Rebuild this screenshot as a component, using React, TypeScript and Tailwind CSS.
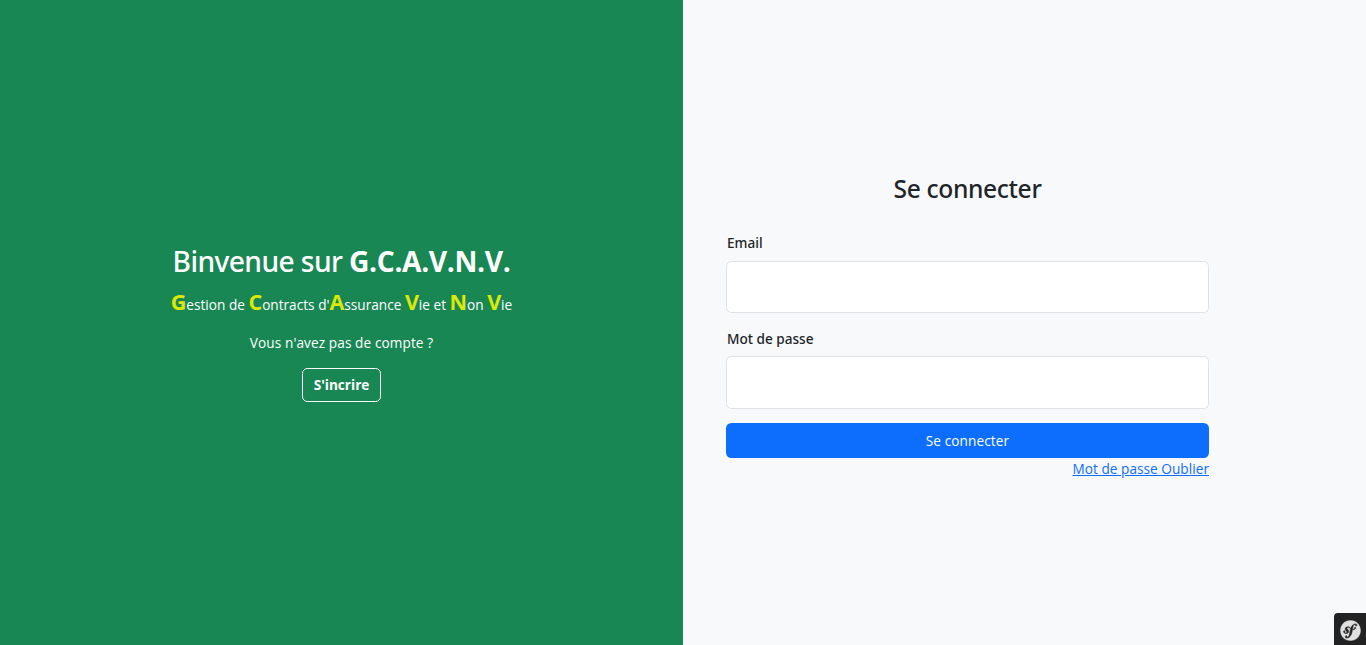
import { SiSymfony } from "react-icons/si";

function Initial({ children }: { children: string }) {
  return <b className="text-[21.6px] font-bold leading-none tracking-[-0.1px] text-[#dce808]">{children}</b>;
}

function Field({ label, type, className }: { label: string; type: string; className: string }) {
  return (
    <label className="flex flex-col font-medium [font-family:'Noto_Sans',sans-serif]">
      <span className="pl-px">{label}</span>
      <input type={type} className={`rounded-[5.4px] border border-[#dee2e6] bg-white px-3 outline-none ${className}`} />
    </label>
  );
}

export default function App() {
  return (
    <div className="relative flex h-[645px] w-full overflow-hidden bg-[#f8f9fa] text-[13.6px] leading-[21px] text-[#212529] [font-family:'Open_Sans','Noto_Sans',sans-serif]">
      <section className="flex w-1/2 flex-col items-center bg-[#198754] pt-[244px] text-white">
        <h1 className="mb-[10px] text-[28.2px] font-medium leading-[35px] tracking-[-0.6px] [font-family:'Noto_Sans',sans-serif]">
          Binvenue sur <b className="font-bold tracking-[-0.35px] [font-family:'Open_Sans',sans-serif]">G.C.A.V.N.V.</b>
        </h1>
        <p className="mb-[11px] leading-[32px] tracking-[0.02px]">
          <Initial>G</Initial>estion de <Initial>C</Initial>ontracts d'<Initial>A</Initial>ssurance <Initial>V</Initial>ie et <Initial>N</Initial>on <Initial>V</Initial>ie
        </p>
        <p className="mb-[15px] tracking-[0.1px]">Vous n'avez pas de compte ?</p>
        <button type="button" className="h-[34px] w-[79px] rounded-[5.4px] border border-white pb-px text-[13.6px] font-bold">S'incrire</button>
      </section>
      <section className="flex w-1/2 justify-start pl-[43px] pt-[173px]">
        <form className="flex w-[483px] flex-col">
          <h2 className="mb-[27px] text-center text-[24.6px] font-medium leading-[32px] tracking-[-0.35px] [font-family:'Noto_Sans',sans-serif]">Se connecter</h2>
          <Field label="Email" type="email" className="mb-[15px] mt-[8px] h-[52px]" />
          <Field label="Mot de passe" type="password" className="mb-[14px] mt-[7px] h-[53px]" />
          <button type="button" className="h-[35px] rounded-[5.4px] bg-[#0d6efd] tracking-[0.11px] text-white">Se connecter</button>
          <a href="#" className="self-end text-[#0d6efd] underline tracking-[0.05px]">Mot de passe Oublier</a>
        </form>
      </section>
      <div className="absolute bottom-0 right-0 flex size-8 items-center justify-center rounded-tl bg-[#222] pt-[3px] text-[#e0e0e0]">
        <SiSymfony className="size-[21px] stroke-[#222] [stroke-width:0.6px]" />
      </div>
    </div>
  );
}
